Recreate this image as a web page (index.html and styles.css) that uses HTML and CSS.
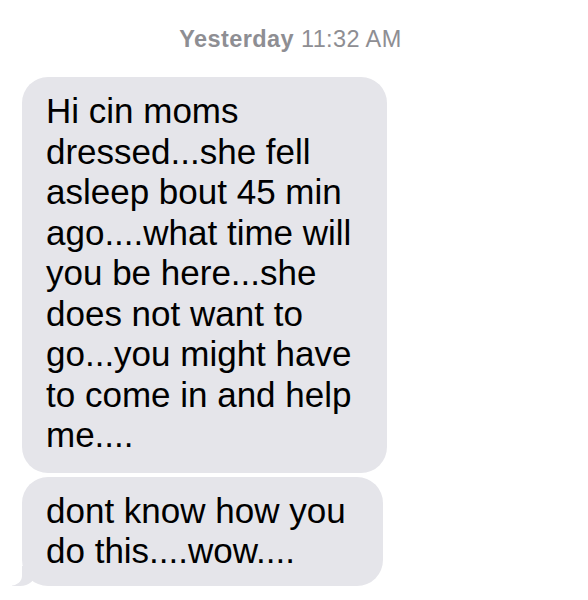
FILE: index.html
```html
<!DOCTYPE html>
<html lang="en">
<head>
    <meta charset="UTF-8">
    <title>Messages</title>
    <link rel="stylesheet" href="styles.css">
</head>
<body>
<div class="thread">
    <div class="stamp"><b>Yesterday</b> 11:32 AM</div>

    <div class="bubble first">
        Hi cin moms<br>
        dressed...she fell<br>
        asleep bout 45 min<br>
        ago....what time will<br>
        you be here...she<br>
        does not want to<br>
        go...you might have<br>
        to come in and help<br>
        me....
    </div>
    <!-- last bubble of the group gets the tail -->
    <div class="bubble last">
        dont know how you<br>
        do this....wow....
    </div>
</div>
</body>
</html>
```

FILE: styles.css
```css
*{
    margin: 0;
    padding: 0;
    box-sizing: border-box;
}
body{
    background: #fff;
    font-family: "Liberation Sans", Arial, sans-serif;
}
.thread{
    width: 588px;
    height: 600px;
    padding: 26px 0 0 22px;
    display: flex;
    flex-direction: column;
    align-items: flex-start;
    gap: 4px;
    overflow: hidden;
}
.stamp{
    align-self: stretch;
    text-align: center;
    padding-right: 29px;
    margin-bottom: 21px;
    font-size: 23.5px;
    line-height: 26px;
    letter-spacing: 0.4px;
    color: #8e8e93;
}
.stamp b{
    font-weight: bold;
}
.bubble{
    position: relative;
    background: #e5e5ea;
    color: #000;
    font-size: 35px;
    line-height: 40.5px;
    border-radius: 26px;
    padding: 14px 10px 17px 24px;
    white-space: nowrap;
}
.first{
    width: 365px;
}
.last{
    width: 361px;
    padding-top: 14px;
    padding-bottom: 14px;
}
/* the little tail, bottom left */
.last::before{
    content: "";
    position: absolute;
    left: -10px;
    bottom: 0;
    width: 24px;
    height: 20px;
    background: #e5e5ea;
    border-bottom-right-radius: 16px 14px;
}
.last::after{
    content: "";
    position: absolute;
    left: -26px;
    bottom: 0;
    width: 26px;
    height: 22px;
    background: #fff;
    border-bottom-right-radius: 12px 10px;
}
```
